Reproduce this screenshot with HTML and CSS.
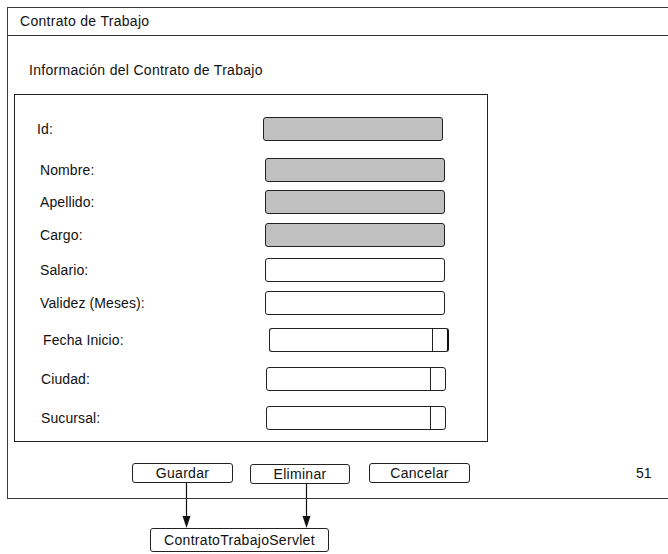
FILE: index.html
```html
<!DOCTYPE html>
<html lang="es">
  <head>
    <meta charset="UTF-8" />
    <meta name="viewport" content="width=device-width, initial-scale=1.0" />
    <title>Contrato de Trabajo</title>

    <!---Estilos-->
    <link rel="stylesheet" href="styles.css">
  </head>

  <body>
    <div class="sheet">
      <!--Ventana principal-->
      <div class="window">
        <div class="titlebar">Contrato de Trabajo</div>
        <div class="window-body">
          <p class="subtitle">Información del Contrato de Trabajo</p>

          <div class="panel">
            <div class="form">
              <div class="row row-left">
                <span class="label">Id:</span>
                <span class="field"></span>
              </div>
              <div class="row">
                <span class="label">Nombre:</span>
                <span class="field"></span>
              </div>
              <div class="row">
                <span class="label">Apellido:</span>
                <span class="field"></span>
              </div>
              <div class="row">
                <span class="label">Cargo:</span>
                <span class="field"></span>
              </div>
              <div class="row">
                <span class="label">Salario:</span>
                <span class="field empty"></span>
              </div>
              <div class="row">
                <span class="label">Validez (Meses):</span>
                <span class="field empty"></span>
              </div>
              <div class="row row-right">
                <span class="label">Fecha Inicio:</span>
                <span class="field combo combo-bold"><span class="arrow"></span></span>
              </div>
              <div class="row row-nudge">
                <span class="label">Ciudad:</span>
                <span class="field combo"><span class="arrow"></span></span>
              </div>
              <div class="row row-nudge">
                <span class="label">Sucursal:</span>
                <span class="field combo"><span class="arrow"></span></span>
              </div>
            </div>
          </div>

          <div class="actions">
            <button class="btn">Guardar</button>
            <button class="btn btn-low">Eliminar</button>
            <button class="btn">Cancelar</button>
            <span class="page-number">51</span>
          </div>
        </div>
      </div>

      <!--Destino de las acciones-->
      <div class="servlet">ContratoTrabajoServlet</div>

      <!--Flechas Guardar / Eliminar -> Servlet-->
      <svg class="links" width="668" height="554" viewBox="0 0 668 554">
        <line x1="186.5" y1="483" x2="186.5" y2="517" stroke="#111" stroke-width="1.2" />
        <polygon points="182.5,516 190.5,516 186.5,528" fill="#111" />
        <line x1="306.5" y1="484" x2="306.5" y2="517" stroke="#111" stroke-width="1.2" />
        <polygon points="302.5,516 310.5,516 306.5,528" fill="#111" />
      </svg>
    </div>
  </body>
</html>
```

FILE: styles.css
```css
html,
body {
  margin: 0;
  overflow: hidden;
  background-color: white;
}

body {
  font-family: "Liberation Sans", Arial, sans-serif;
  font-size: 14px;
  color: #111;
}

.sheet {
  position: relative;
  width: 668px;
  height: 554px;
  padding: 7px 0 0 7px;
  box-sizing: border-box;
}

/* Ventana (sigue fuera del marco por la derecha) */
.window {
  border: 1px solid #3a3a3a;
  border-right: none;
}

.titlebar {
  height: 27px;
  line-height: 27px;
  padding-left: 12px;
  border-bottom: 1px solid #333;
  letter-spacing: 0.3px;
}

.window-body {
  padding: 26px 0 14px 0;
}

.subtitle {
  margin: 0 0 0 21px;
  line-height: 16px;
  letter-spacing: 0.3px;
}

/* Panel con el formulario */
.panel {
  margin: 16px 0 0 6px;
  width: 474px;
  box-sizing: border-box;
  border: 1px solid #222;
  padding: 22px 0 11px 25px;
}

.form {
  display: grid;
  grid-template-rows: 41px 32px 33px 35px 33px 37px 39px 39px 24px;
}

.row {
  display: flex;
  align-items: flex-start;
}

.label {
  width: 225px;
  line-height: 24px;
  letter-spacing: 0.1px;
}

.row-left {
  margin-left: -3px;
}

.row-left .field {
  margin-left: 1px;
}

.row-right .label {
  margin-left: 3px;
}

.row-right .field {
  margin-left: 1px;
}

.row-nudge .label {
  margin-left: 1px;
}

.field {
  display: flex;
  justify-content: flex-end;
  width: 180px;
  height: 24px;
  box-sizing: border-box;
  border: 1px solid #222;
  border-radius: 3px;
  background-color: #c0c0c0;
}

.field.empty,
.field.combo {
  background-color: white;
}

.combo .arrow {
  width: 14px;
  border-left: 1px solid #222;
}

.combo-bold {
  border-right: 2px solid #111;
}

/* Botones */
.actions {
  display: flex;
  align-items: flex-start;
  margin: 21px 0 0 124px;
}

.btn {
  width: 101px;
  height: 20px;
  padding: 0;
  margin-right: 17px;
  font-family: inherit;
  font-size: 14px;
  color: #111;
  background-color: white;
  border: 1px solid #222;
  border-radius: 3px;
  letter-spacing: 0.3px;
}

.btn-low {
  width: 100px;
  margin-top: 1px;
  margin-right: 19px;
}

.page-number {
  margin-left: 149px;
  line-height: 20px;
}

/* Servlet */
.servlet {
  margin: 29px 0 0 143px;
  width: 179px;
  height: 24px;
  box-sizing: border-box;
  border: 1px solid #222;
  border-radius: 3px;
  text-align: center;
  line-height: 22px;
  letter-spacing: 0.3px;
}

.links {
  position: absolute;
  top: 0;
  left: 0;
  pointer-events: none;
}
```
